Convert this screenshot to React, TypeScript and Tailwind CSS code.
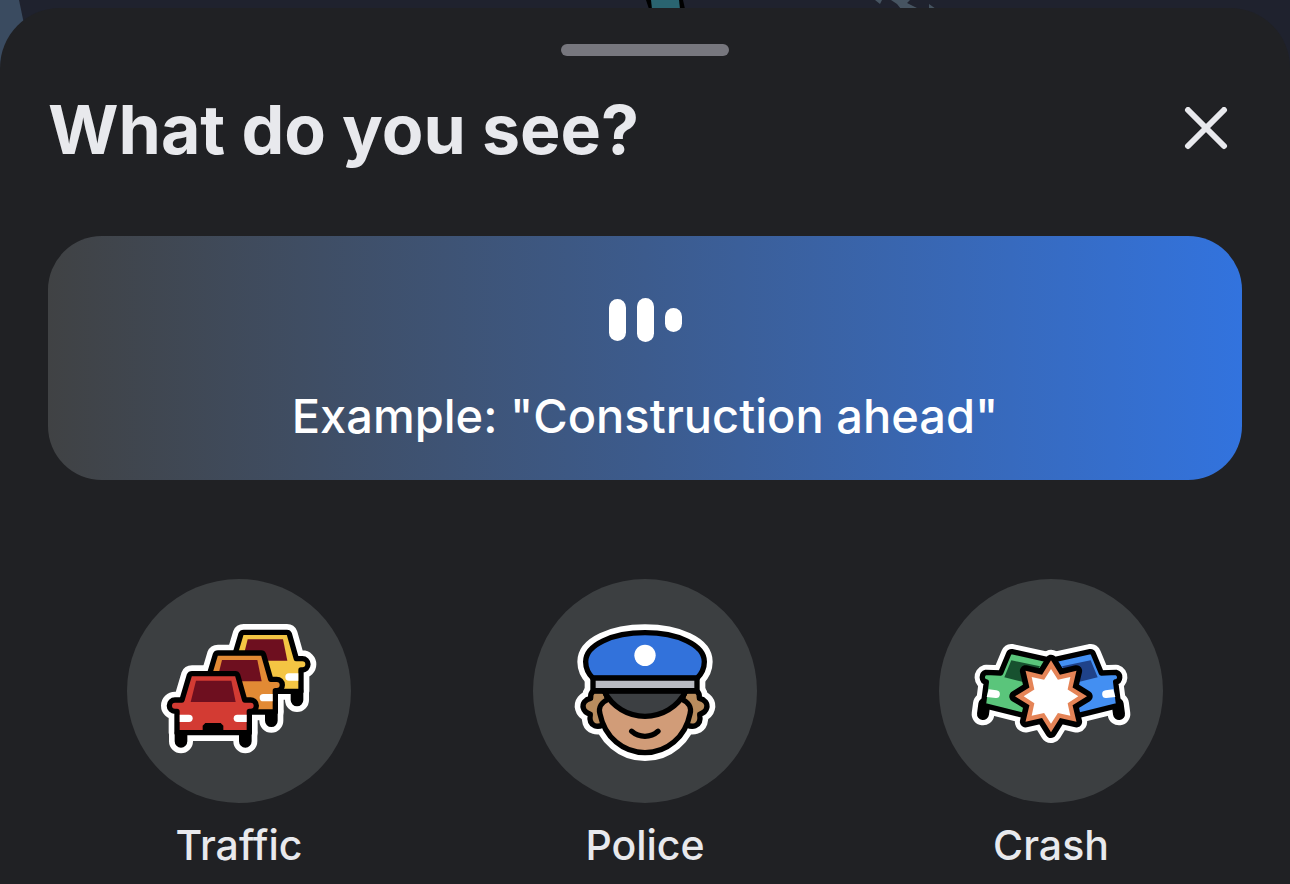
import React from "react";

type CarProps = { x: number; y: number; color: string; windowColor: string };

const CAR_BODY =
  "M126 191H256Q261 191 263 196L284 270H302A17 17 0 0 1 302 304H298V368H81V304H75A17 17 0 0 1 75 270H96L118 196Q120 191 126 191Z";
const CAR_WHEELS = "M93 368V394M286 368V394";

function CarHalo({ x, y }: { x: number; y: number }) {
  return (
    <g transform={`translate(${x} ${y})`} stroke="#fff" strokeLinejoin="round" strokeLinecap="round" fill="#fff">
      <path d={CAR_BODY} strokeWidth="50" />
      <path d={CAR_WHEELS} strokeWidth="72" />
    </g>
  );
}

function Car({ x, y, color, windowColor }: CarProps) {
  return (
    <g transform={`translate(${x} ${y})`}>
      <path d={CAR_WHEELS} stroke="#000" strokeWidth="38" strokeLinecap="round" />
      <path d={CAR_BODY} fill={color} stroke="#000" strokeWidth="16" strokeLinejoin="round" />
      <path d="M138 212H244L257 276H122Z" fill={windowColor} />
      <path d="M89 314H117A11 11 0 0 1 117 336H89Z" fill="#fff" />
      <path d="M290 314H262A11 11 0 0 0 262 336H290Z" fill="#fff" />
      <path d="M158 364V347L166 339H212L220 347V364Z" fill="#000" />
    </g>
  );
}

function TrafficIcon() {
  return (
    <svg viewBox="-69 -93 672 672" className="size-full" fill="none" aria-hidden="true">
      <CarHalo x={155} y={-124} />
      <CarHalo x={78} y={-62} />
      <CarHalo x={0} y={0} />
      <Car x={155} y={-124} color="#f4c543" windowColor="#6e0f1f" />
      <Car x={78} y={-62} color="#e28a34" windowColor="#6e0f1f" />
      <Car x={0} y={0} color="#d33b33" windowColor="#6e0f1f" />
    </svg>
  );
}

const CAP =
  "M99 205C84 190 77 174 77 155C77 104 158 68 255 68C352 68 433 104 433 155C433 174 426 190 411 205Z";
const FACE =
  "M136 248L144 268C126 276 114 292 120 312C134 382 190 428 255 428C320 428 376 382 390 312C396 292 384 276 366 268L374 248Z";
const HAIR_LEFT =
  "M100 243C93 248 91 256 92 265C76 268 66 280 70 294C73 306 82 310 91 313C88 330 92 343 104 347C112 350 120 349 128 345L144 268L134 243Z";

function PoliceIcon() {
  return (
    <svg viewBox="-81 -93 672 672" className="size-full" fill="none" strokeLinejoin="round" strokeLinecap="round" aria-hidden="true">
      <g fill="#fff" stroke="#fff" strokeWidth="50">
        <path d={CAP} />
        <path d="M99 205H411V242H99Z" />
        <path d={FACE} />
        <path d={HAIR_LEFT} />
        <path d={HAIR_LEFT} transform="translate(510 0) scale(-1 1)" />
      </g>
      <g stroke="#000" strokeWidth="16">
        <path d={HAIR_LEFT} fill="#b98d5e" />
        <path d={HAIR_LEFT} fill="#b98d5e" transform="translate(510 0) scale(-1 1)" />
        <path d={FACE} fill="#d19c78" />
        <path d="M132 243C158 292 204 319 255 319C306 319 352 292 378 243Z" fill="#3c3f42" />
        <path d={CAP} fill="#3272db" />
        <path d="M99 204H411V242H99Z" fill="#b9bbc1" />
        <path d="M215 364C238 384 272 384 294 364" />
      </g>
      <circle cx="255" cy="136" r="32" fill="#fff" />
    </svg>
  );
}

const WRECK_BODY =
  "M156 65L273 91L230 266L70 226L79 156C64 154 62 132 78 127L122 129L146 71Q149 64 156 65Z";
const WRECK_WHEEL = "M73 222L69 252";

function burst(outer: number, inner: number) {
  return Array.from({ length: 16 }, (_, i) => {
    const r = i % 2 === 0 ? outer : inner;
    const a = (i * Math.PI) / 8;
    return `${(273 + r * Math.sin(a)).toFixed(1)},${(199 - r * Math.cos(a)).toFixed(1)}`;
  }).join(" ");
}

function Wreck({ color, windowColor }: { color: string; windowColor: string }) {
  return (
    <g>
      <path d={WRECK_WHEEL} stroke="#000" strokeWidth="36" />
      <path d={WRECK_BODY} fill={color} stroke="#000" strokeWidth="16" />
      <path d="M154 91L240 109L205 160L133 142Z" fill={windowColor} />
      <path d="M86 178L109 181A11 11 0 0 1 107 204L80 201Z" fill="#fff" />
    </g>
  );
}

function CrashIcon() {
  const mirror = "translate(546 0) scale(-1 1)";
  return (
    <svg viewBox="-63 -153 672 672" className="size-full" fill="none" strokeLinejoin="round" strokeLinecap="round" aria-hidden="true">
      <g fill="#fff" stroke="#fff">
        {[undefined, mirror].map((t, i) => (
          <g key={i} transform={t}>
            <path d={WRECK_BODY} strokeWidth="46" />
            <path d={WRECK_WHEEL} strokeWidth="68" />
          </g>
        ))}
        <polygon points={burst(108, 70)} strokeWidth="64" />
      </g>
      <Wreck color="#5ac57b" windowColor="#17512f" />
      <g transform={mirror}>
        <Wreck color="#438ff2" windowColor="#1f4289" />
      </g>
      <polygon points={burst(108, 70)} fill="#000" stroke="#000" strokeWidth="34" />
      <polygon points={burst(108, 70)} fill="#e58457" />
      <polygon points={burst(82, 54)} fill="#fff" />
    </svg>
  );
}

function MapBackdrop() {
  return (
    <div className="absolute inset-x-0 top-0 flex h-24 justify-between bg-[#1f222e]" aria-hidden="true">
      <svg viewBox="0 0 24 96" className="h-24 w-6">
        <path d="M0 0H19L24 24V96H0Z" fill="#3a4b60" />
      </svg>
      <svg viewBox="0 0 300 96" className="absolute left-1/2 h-24 w-[300px]">
        <path d="M1 0H38L40 9H4Z" fill="#000" />
        <path d="M6 0H34L35 9H7Z" fill="#2a6470" />
        <path d="M230 0H237L235 4ZM246 0H265L262 3L274 9H256L252 4ZM284 4L291 9H284Z" fill="#465461" />
      </svg>
    </div>
  );
}

const REPORTS = [
  { label: "Traffic", Icon: TrafficIcon },
  { label: "Police", Icon: PoliceIcon },
  { label: "Crash", Icon: CrashIcon },
];

export default function App() {
  return (
    <div className="relative min-h-screen bg-[#202124] pt-2 font-['Inter',sans-serif] text-[#e8e9ed]">
      <MapBackdrop />
      <main className="relative rounded-t-[60px] bg-[#202124] pt-9">
        <div className="mx-auto h-3 w-42 rounded-full bg-[#77777e]" />
        <header className="mt-8 flex items-center justify-between px-12">
          <h1 className="text-[68px] leading-[82px] font-bold">What do you see?</h1>
          <button type="button" aria-label="Close" className="flex size-18 items-center justify-center">
            <svg viewBox="0 0 44 44" className="size-11" fill="none" stroke="#e8e9ed" strokeWidth="6" strokeLinecap="round" aria-hidden="true">
              <path d="M4 3L40 39M40 3L4 39" />
            </svg>
          </button>
        </header>
        <div className="mt-[66px] px-12">
          <button
            type="button"
            className="flex h-61 w-full flex-col items-center rounded-[54px] bg-linear-to-r from-[#404244] via-[#3c5b8d] to-[#3273de] pt-15 text-white"
          >
            <svg viewBox="0 0 74 48" className="h-12 w-[74px]" fill="currentColor" aria-hidden="true">
              <rect x="1" y="3" width="17" height="42" rx="8.5" />
              <rect x="29" y="2" width="17" height="44" rx="8.5" />
              <rect x="57" y="12" width="17" height="24" rx="8.5" />
            </svg>
            <span className="mt-11 text-[47px] leading-14 font-medium">Example: "Construction ahead"</span>
          </button>
        </div>
        <ul className="mt-[99px] grid grid-cols-3 px-9">
          {REPORTS.map(({ label, Icon }) => (
            <li key={label} className="flex justify-center">
              <button type="button" className="flex flex-col items-center">
                <span className="size-56 rounded-full bg-[#3c3f41]">
                  <Icon />
                </span>
                <span className="mt-4 text-[41px] leading-13 font-medium">{label}</span>
              </button>
            </li>
          ))}
        </ul>
      </main>
    </div>
  );
}
